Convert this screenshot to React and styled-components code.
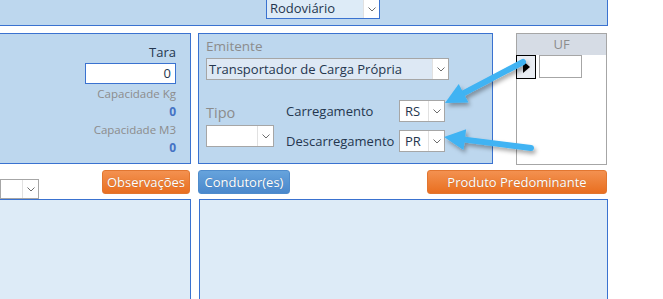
import React from "react"
import styled, { createGlobalStyle } from "styled-components"

const Global = createGlobalStyle`
  html, body {
    margin: 0;
    padding: 0;
    background: #ffffff;
    overflow: hidden;
  }
  body {
    font-family: "Open Sans", "Noto Sans", "Liberation Sans", sans-serif;
    font-size: 13px;
    color: #24364f;
  }
`

const Page = styled.div`
  position: relative;
  width: 663px;
  height: 299px;
  overflow: hidden;
`

const TopPanel = styled.div`
  box-sizing: border-box;
  width: 608px;
  height: 26px;
  background: #bdd7ee;
  border-right: 1px solid #3a72d0;
  border-bottom: 1px solid #3a72d0;
  display: flex;
  align-items: flex-start;
  padding-left: 266px;
`

const Row = styled.div`
  display: flex;
  align-items: flex-start;
  margin-top: ${p => p.top || 0}px;
`

const Panel = styled.div`
  box-sizing: border-box;
  background: ${p => p.light ? "#ddebf7" : "#bdd7ee"};
  border: 1px solid #3a72d0;
  border-left: ${p => p.cutLeft ? "none" : "1px solid #3a72d0"};
  width: ${p => p.w}px;
  height: ${p => p.h}px;
  margin-left: ${p => p.ml || 0}px;
`

const SideStack = styled(Panel)`
  display: flex;
  flex-direction: column;
  align-items: flex-end;
  padding: 10px 14px 0 0;
`

const Label = styled.div`
  font-size: ${p => p.size || 13}px;
  line-height: ${p => p.lh || 17}px;
  color: ${p => p.muted ? "#8c8c8c" : "#24364f"};
  white-space: nowrap;
`

const NumberText = styled.div`
  font-size: 12px;
  font-weight: 700;
  line-height: 18px;
  color: #4472c4;
`

const TextBox = styled.div`
  box-sizing: border-box;
  width: ${p => p.w}px;
  height: ${p => p.h}px;
  background: #fff;
  border: 1px solid ${p => p.gray ? "#a6a6a6" : "#3a72d0"};
  text-align: right;
  padding-right: 4px;
  font-size: 13px;
  line-height: ${p => p.h - 2}px;
  margin-left: ${p => p.ml || 0}px;
`

const SelectBox = styled.div`
  box-sizing: border-box;
  display: flex;
  width: ${p => p.w}px;
  height: ${p => p.h}px;
  background: ${p => p.bg || "#fff"};
  border: 1px solid ${p => p.border || "#a6a6a6"};
  border-top: ${p => p.cutTop ? "none" : `1px solid ${p.border || "#a6a6a6"}`};
`

const SelectValue = styled.div`
  flex: 1;
  font-size: 13px;
  line-height: ${p => p.lh}px;
  padding-left: ${p => p.pl || 3}px;
  white-space: nowrap;
  overflow: hidden;
  color: #24364f;
`

const DropButton = styled.div`
  width: 15px;
  background: #fff;
  border-left: 1px solid #e1e1e1;
  display: flex;
  align-items: center;
  justify-content: center;
`

const Chevron = () => (
  <svg width="8" height="5" viewBox="0 0 8 5">
    <polyline points="0.5,0.5 4,4 7.5,0.5" fill="none" stroke="#6d6d6d" strokeWidth="1" />
  </svg>
)

const Select = ({ value = "", w, h, bg, border, cutTop, pl }) => (
  <SelectBox w={w} h={h} bg={bg} border={border} cutTop={cutTop}>
    <SelectValue lh={h - 2} pl={pl}>{value}</SelectValue>
    <DropButton>
      <Chevron />
    </DropButton>
  </SelectBox>
)

const MidPanel = styled(Panel)`
  padding: 4px 0 0 7px;
`

const Lower = styled.div`
  display: flex;
  margin-top: 20px;
`

const TipoCol = styled.div`
  display: flex;
  flex-direction: column;
  width: 68px;
  padding-top: 4px;
  gap: 3px;
`

const PlaceGrid = styled.div`
  display: grid;
  grid-template-columns: 113px 46px;
  row-gap: 8px;
  margin-left: 12px;
  align-items: center;
`

const UFPanel = styled.div`
  box-sizing: border-box;
  width: 91px;
  height: 132px;
  margin-left: 23px;
  border: 1px solid #a6a6a6;
  background: #fff;
`

const UFHeader = styled.div`
  height: 21px;
  background: #d6dce5;
  color: #8c8c8c;
  text-align: center;
  font-size: 13px;
  line-height: 21px;
`

const UFRow = styled.div`
  display: flex;
  align-items: flex-start;
`

const RecordSelector = styled.div`
  box-sizing: border-box;
  width: 20px;
  height: 24px;
  margin-left: -1px;
  border: 1px solid #000;
  background: #e9edf3;
  display: flex;
  align-items: center;
  justify-content: center;
`

const Button = styled.div`
  box-sizing: border-box;
  width: ${p => p.w}px;
  height: 24px;
  margin-left: ${p => p.ml || 0}px;
  border-radius: 3px;
  color: #fff;
  font-size: 13px;
  line-height: 22px;
  text-align: center;
  text-shadow: 0 0 1px rgba(0, 0, 0, 0.25);
  background: ${p => p.blue
    ? "linear-gradient(#66a3dc, #4a88cc)"
    : "linear-gradient(#f39150, #e96f20)"};
  border: 1px solid ${p => p.blue ? "#4f8ccc" : "#e27630"};
`

const Overlay = styled.svg`
  position: absolute;
  left: 0;
  top: 0;
  pointer-events: none;
`

const Arrow = ({ x1, y1, x2, y2 }) => {
  const dx = x2 - x1
  const dy = y2 - y1
  const len = Math.hypot(dx, dy)
  const ux = dx / len
  const uy = dy / len
  const hl = 21
  const hw = 10.5
  const bx = x2 - ux * hl
  const by = y2 - uy * hl
  const px = -uy
  const py = ux
  return (
    <g>
      <line x1={x1} y1={y1} x2={bx + ux * 2} y2={by + uy * 2} stroke="#3fb3f3" strokeWidth="6" strokeLinecap="round" />
      <polygon
        points={`${x2},${y2} ${bx + px * hw},${by + py * hw} ${bx - px * hw},${by - py * hw}`}
        fill="#3fb3f3"
      />
    </g>
  )
}

export default function App() {
  return (
    <Page>
      <Global />
      <TopPanel>
        <Select value="Rodoviário" w={114} h={19} bg="#ddebf7" border="#3a72d0" cutTop />
      </TopPanel>

      <Row top={7}>
        <SideStack w={191} h={131} cutLeft>
          <Label>Tara</Label>
          <TextBox w={91} h={21} style={{ marginTop: 2 }}>0</TextBox>
          <Label muted size={11.5} lh={18} style={{ marginTop: 1 }}>Capacidade Kg</Label>
          <NumberText>0</NumberText>
          <Label muted size={11.5} lh={18}>Capacidade M3</Label>
          <NumberText>0</NumberText>
        </SideStack>

        <MidPanel w={295} h={131} ml={7}>
          <Label muted size={13.5} lh={17}>Emitente</Label>
          <div style={{ marginTop: 3 }}>
            <Select value="Transportador de Carga Própria" w={243} h={22} bg="#dde8f4" pl={2} />
          </div>
          <Lower>
            <TipoCol>
              <Label muted size={14.5} lh={18}>Tipo</Label>
              <Select w={68} h={22} />
            </TipoCol>
            <PlaceGrid>
              <Label size={13}>Carregamento</Label>
              <Select value="RS" w={46} h={22} pl={5} />
              <Label size={13}>Descarregamento</Label>
              <Select value="PR" w={46} h={22} pl={5} />
            </PlaceGrid>
          </Lower>
        </MidPanel>

        <UFPanel>
          <UFHeader>UF</UFHeader>
          <UFRow>
            <RecordSelector>
              <svg width="7" height="12" viewBox="0 0 7 12">
                <polygon points="0,0 7,6 0,12" fill="#000" />
              </svg>
            </RecordSelector>
            <TextBox w={43} h={23} gray ml={3} />
          </UFRow>
        </UFPanel>
      </Row>

      <Row top={5}>
        <div style={{ marginTop: 9 }}>
          <Select w={39} h={20} />
        </div>
        <Button ml={63} w={88}>Observações</Button>
        <Button ml={8} w={92} blue>Condutor(es)</Button>
        <Button ml={137} w={180}>Produto Predominante</Button>
      </Row>

      <Row>
        <Panel w={191} h={120} light cutLeft />
        <Panel w={409} h={120} light ml={8} />
      </Row>

      <Overlay width="663" height="299">
        <defs>
          <filter id="sh" x="-20%" y="-20%" width="140%" height="140%">
            <feDropShadow dx="2" dy="3" stdDeviation="2" floodColor="#000" floodOpacity="0.35" />
          </filter>
        </defs>
        <g filter="url(#sh)">
          <Arrow x1={523} y1={62} x2={445} y2={103} />
          <Arrow x1={531} y1={148} x2={444} y2={137} />
        </g>
      </Overlay>
    </Page>
  )
}
